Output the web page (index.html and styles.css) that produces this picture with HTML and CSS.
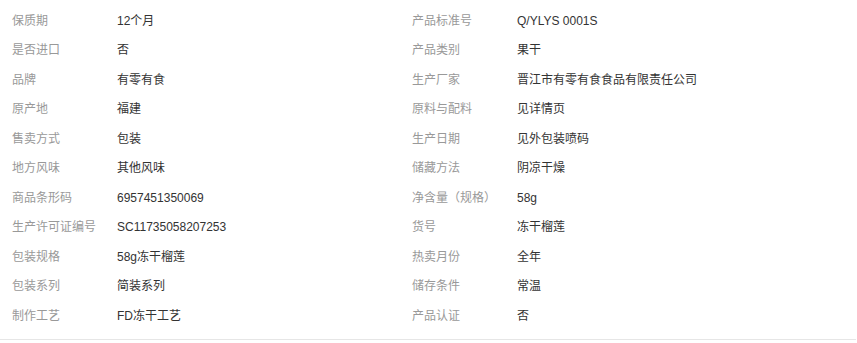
FILE: index.html
```html
<!DOCTYPE html>
<html lang="zh">
<head>
<meta charset="utf-8">
<link rel="stylesheet" href="styles.css">
</head>
<body>
<ul class="attrs">
  <li class="attr"><span class="k">保质期</span><span class="v">12个月</span></li>
  <li class="attr"><span class="k">产品标准号</span><span class="v">Q/YLYS 0001S</span></li>
  <li class="attr"><span class="k">是否进口</span><span class="v">否</span></li>
  <li class="attr"><span class="k">产品类别</span><span class="v">果干</span></li>
  <li class="attr"><span class="k">品牌</span><span class="v">有零有食</span></li>
  <li class="attr"><span class="k">生产厂家</span><span class="v">晋江市有零有食食品有限责任公司</span></li>
  <li class="attr"><span class="k">原产地</span><span class="v">福建</span></li>
  <li class="attr"><span class="k">原料与配料</span><span class="v">见详情页</span></li>
  <li class="attr"><span class="k">售卖方式</span><span class="v">包装</span></li>
  <li class="attr"><span class="k">生产日期</span><span class="v">见外包装喷码</span></li>
  <li class="attr"><span class="k">地方风味</span><span class="v">其他风味</span></li>
  <li class="attr"><span class="k">储藏方法</span><span class="v">阴凉干燥</span></li>
  <li class="attr"><span class="k">商品条形码</span><span class="v">6957451350069</span></li>
  <li class="attr"><span class="k">净含量（规格）</span><span class="v">58g</span></li>
  <li class="attr"><span class="k">生产许可证编号</span><span class="v">SC11735058207253</span></li>
  <li class="attr"><span class="k">货号</span><span class="v">冻干榴莲</span></li>
  <li class="attr"><span class="k">包装规格</span><span class="v">58g冻干榴莲</span></li>
  <li class="attr"><span class="k">热卖月份</span><span class="v">全年</span></li>
  <li class="attr"><span class="k">包装系列</span><span class="v">简装系列</span></li>
  <li class="attr"><span class="k">储存条件</span><span class="v">常温</span></li>
  <li class="attr"><span class="k">制作工艺</span><span class="v">FD冻干工艺</span></li>
  <li class="attr"><span class="k">产品认证</span><span class="v">否</span></li>
</ul>
</body>
</html>
```
FILE: styles.css
```css
html, body {
  margin: 0;
  padding: 0;
  background: #fff;
}
body {
  font-family: "Liberation Sans", "Noto Sans CJK SC", sans-serif;
  font-size: 12px;
}
.attrs {
  list-style: none;
  margin: 0;
  padding: 6px 0 8px 12px;
  width: 856px;
  box-sizing: border-box;
  display: grid;
  grid-template-columns: 400px 400px;
  grid-auto-rows: 29.5px;
  border-bottom: 1px solid #e6e6e6;
}
.attr {
  display: flex;
  align-items: center;
  line-height: 16px;
}
.k {
  width: 105px;
  flex: none;
  color: #999;
}
.v {
  color: #333;
}
```
